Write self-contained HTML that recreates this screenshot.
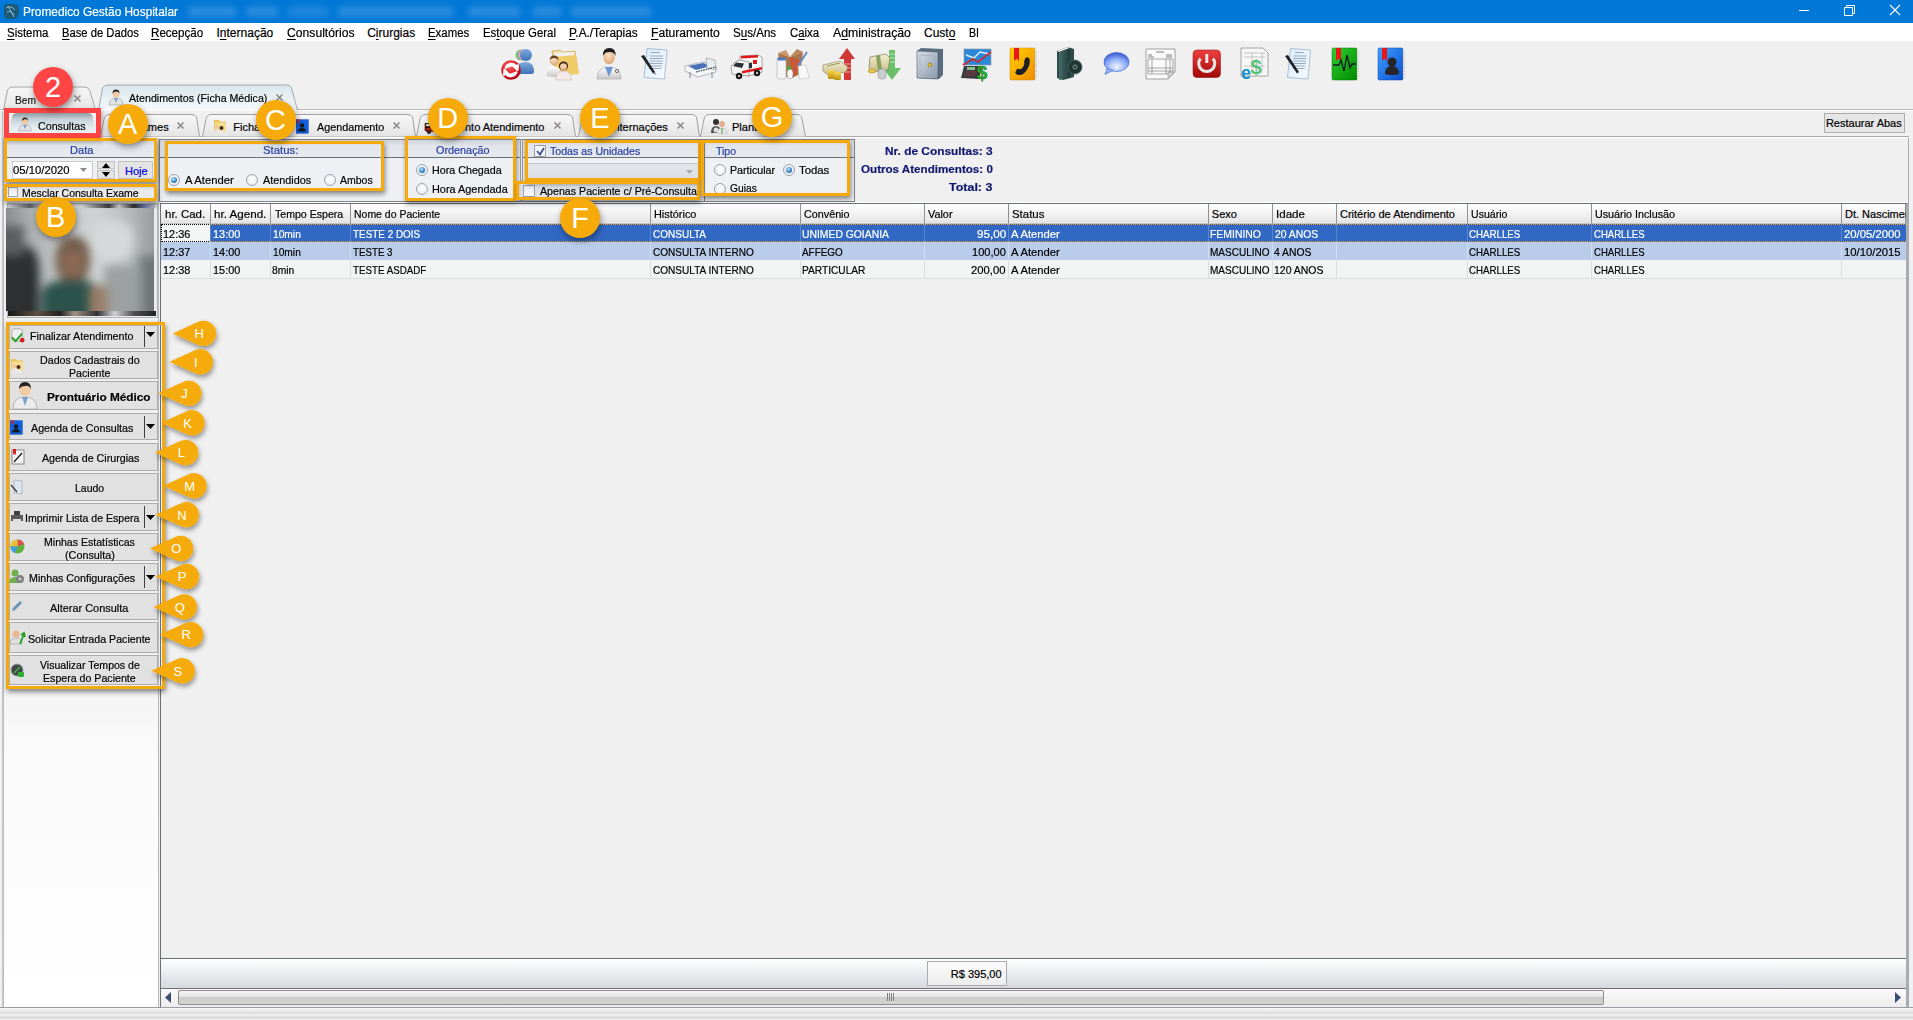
<!DOCTYPE html>
<html><head><meta charset="utf-8">
<style>
*{margin:0;padding:0;box-sizing:border-box}
html,body{width:1913px;height:1020px;overflow:hidden;background:#f0f0f0;font-family:"Liberation Sans",sans-serif;color:#000}
.a{position:absolute}
.t{position:absolute;white-space:nowrap;line-height:1}
.t,.gt,.mi,.bt{-webkit-text-stroke:0.2px currentColor}
#title{left:0;top:0;width:1913px;height:23px;background:#0078d7}
#menu{left:0;top:23px;width:1913px;height:18px;background:#fff}
.mi{position:absolute;top:27px;font-size:12px;white-space:nowrap;line-height:1;color:#000}
.mi u{text-decoration:underline;text-decoration-thickness:1px;text-underline-offset:1.5px}
.ico{position:absolute;top:48px;width:32px;height:32px}
</style></head><body>
<!-- TITLE BAR -->
<div id="title" class="a"></div>
<svg class="a" style="left:2px;top:3px" width="18" height="17" viewBox="0 0 18 17"><path d="M2 4Q2 1 6 1L13 1Q17 2 17 8Q17 15 12 16L5 16Q2 15 2 11Z" fill="#1c5a78"/><path d="M4 5 Q9 2 13 7 M5 9 Q9 7 12 12 M6 3 L12 14" stroke="#9fd0e0" stroke-width="0.8" fill="none"/></svg>
<div class="t" style="left:23.0px;top:6.0px;font-size:12.5px;color:#fff;transform:scaleX(0.949);transform-origin:0 0">Promedico Gestão Hospitalar</div>
<div class="a" style="left:188px;top:6px;width:463px;height:12px;filter:blur(3px);opacity:0.75">
 <div class="a" style="left:0;top:1px;width:48px;height:9px;background:#3d95e0"></div>
 <div class="a" style="left:58px;top:1px;width:32px;height:9px;background:#3d95e0"></div>
 <div class="a" style="left:100px;top:1px;width:40px;height:9px;background:#2f8cdc"></div>
 <div class="a" style="left:150px;top:1px;width:115px;height:9px;background:#3d95e0"></div>
 <div class="a" style="left:280px;top:1px;width:52px;height:9px;background:#3d95e0"></div>
 <div class="a" style="left:345px;top:1px;width:28px;height:9px;background:#3d95e0"></div>
 <div class="a" style="left:383px;top:1px;width:80px;height:9px;background:#3d95e0"></div>
</div>
<div class="a" style="left:1799px;top:10px;width:10px;height:1px;background:#fff"></div>
<svg class="a" style="left:1843px;top:4px" width="13" height="13" viewBox="0 0 13 13"><path d="M1.5 3.5h8v8h-8z M3.5 3.5v-2h8v8h-2" stroke="#fff" fill="none"/></svg>
<svg class="a" style="left:1889px;top:4px" width="12" height="12" viewBox="0 0 12 12"><path d="M1 1L11 11M11 1L1 11" stroke="#fff" stroke-width="1.1"/></svg>

<!-- MENU -->
<div id="menu" class="a"></div>
<div class="mi" style="left:6.7px;top:27.1px;;transform:scaleX(0.955);transform-origin:0 0"><u>S</u>istema</div>
<div class="mi" style="left:61.7px;top:27.1px;;transform:scaleX(0.936);transform-origin:0 0"><u>B</u>ase de Dados</div>
<div class="mi" style="left:151.3px;top:27.1px;;transform:scaleX(0.966);transform-origin:0 0"><u>R</u>ecepção</div>
<div class="mi" style="left:216.5px;top:27.1px;">I<u>n</u>ternação</div>
<div class="mi" style="left:286.7px;top:27.1px;;transform:scaleX(1.013);transform-origin:0 0"><u>C</u>onsultórios</div>
<div class="mi" style="left:367.2px;top:27.1px;">C<u>i</u>rurgias</div>
<div class="mi" style="left:428.3px;top:27.1px;;transform:scaleX(0.950);transform-origin:0 0"><u>E</u>xames</div>
<div class="mi" style="left:482.5px;top:27.1px;;transform:scaleX(0.951);transform-origin:0 0">Es<u>t</u>oque Geral</div>
<div class="mi" style="left:568.5px;top:27.1px;;transform:scaleX(0.984);transform-origin:0 0"><u>P</u>.A./Terapias</div>
<div class="mi" style="left:650.7px;top:27.1px;;transform:scaleX(1.011);transform-origin:0 0"><u>F</u>aturamento</div>
<div class="mi" style="left:733.0px;top:27.1px;;transform:scaleX(0.964);transform-origin:0 0">S<u>u</u>s/Ans</div>
<div class="mi" style="left:789.8px;top:27.1px;;transform:scaleX(0.948);transform-origin:0 0">C<u>a</u>ixa</div>
<div class="mi" style="left:832.5px;top:27.1px;;transform:scaleX(1.025);transform-origin:0 0">A<u>d</u>ministração</div>
<div class="mi" style="left:924.0px;top:27.1px;">Cust<u>o</u></div>
<div class="mi" style="left:969.1px;top:27.1px;;transform:scaleX(0.890);transform-origin:0 0">BI</div>

<!-- TOOLBAR ICONS -->
<svg class="a" style="left:0;top:44px" width="1420" height="40" viewBox="0 44 1420 40">
<defs>
 <linearGradient id="gBlue" x1="0" y1="0" x2="0" y2="1"><stop offset="0" stop-color="#7aa8dc"/><stop offset="1" stop-color="#3f74b8"/></linearGradient>
 <radialGradient id="gRed" cx="0.4" cy="0.3" r="0.8"><stop offset="0" stop-color="#ff6a6a"/><stop offset="0.6" stop-color="#d8101c"/><stop offset="1" stop-color="#a00010"/></radialGradient>
 <linearGradient id="gFold" x1="0" y1="0" x2="0" y2="1"><stop offset="0" stop-color="#f8e2a0"/><stop offset="1" stop-color="#e0b850"/></linearGradient>
 <radialGradient id="gSkin" cx="0.45" cy="0.35" r="0.7"><stop offset="0" stop-color="#fde4c8"/><stop offset="1" stop-color="#d8a070"/></radialGradient>
 <linearGradient id="gCoat" x1="0" y1="0" x2="0" y2="1"><stop offset="0" stop-color="#ffffff"/><stop offset="1" stop-color="#c8c8c8"/></linearGradient>
 <linearGradient id="gPaper" x1="0" y1="0" x2="1" y2="1"><stop offset="0" stop-color="#d8ecfc"/><stop offset="1" stop-color="#f8fbff"/></linearGradient>
 <linearGradient id="gSafe" x1="0" y1="0" x2="1" y2="1"><stop offset="0" stop-color="#d8e0e8"/><stop offset="1" stop-color="#8898a8"/></linearGradient>
 <linearGradient id="gYel" x1="0" y1="0" x2="1" y2="1"><stop offset="0" stop-color="#ffd200"/><stop offset="1" stop-color="#f08c00"/></linearGradient>
 <linearGradient id="gGrn" x1="0" y1="0" x2="1" y2="1"><stop offset="0" stop-color="#30d030"/><stop offset="1" stop-color="#008a00"/></linearGradient>
 <linearGradient id="gBlu2" x1="0" y1="0" x2="1" y2="1"><stop offset="0" stop-color="#40a0ff"/><stop offset="1" stop-color="#0a50d0"/></linearGradient>
 <radialGradient id="gChat" cx="0.5" cy="0.75" r="0.8"><stop offset="0" stop-color="#f0f6ff"/><stop offset="0.5" stop-color="#90b0f8"/><stop offset="1" stop-color="#2848d0"/></radialGradient>
 <linearGradient id="gPow" x1="0" y1="0" x2="0" y2="1"><stop offset="0" stop-color="#f04040"/><stop offset="1" stop-color="#a00808"/></linearGradient>
 <linearGradient id="gDark" x1="0" y1="0" x2="1" y2="0"><stop offset="0" stop-color="#466c68"/><stop offset="1" stop-color="#1e3a38"/></linearGradient>
 <linearGradient id="gBill" x1="0" y1="0" x2="0" y2="1"><stop offset="0" stop-color="#f4f0d0"/><stop offset="1" stop-color="#c8bc88"/></linearGradient>
 <linearGradient id="gGold" x1="0" y1="0" x2="0" y2="1"><stop offset="0" stop-color="#f8d850"/><stop offset="1" stop-color="#c09010"/></linearGradient>
</defs>
<!-- 1 users refresh 501-533 x 47-80 -->
<circle cx="521" cy="55" r="5.5" fill="#78c078"/><circle cx="523.5" cy="55" r="5.5" fill="#d898c0"/>
<circle cx="526" cy="55" r="6" fill="url(#gBlue)"/>
<path d="M515 72 Q515 62 526 62 Q534 62 534 72 Q534 74 530 74 L517 74Z" fill="url(#gBlue)"/>
<circle cx="511" cy="70" r="9.8" fill="url(#gRed)"/>
<path d="M505.5 68.5 A6 6 0 0 1 516 66 L513.5 66 L517.5 70 L518 64.5 M516.5 71.5 A6 6 0 0 1 506 74 L508.5 74 L504.5 70 L504 75.5" stroke="#fff" stroke-width="2.2" fill="#fff" stroke-linejoin="round"/>
<!-- 2 folder people 547-579 x 49-79 -->
<path d="M552 51 L560 50 L562 52 L575 51 L578 72 L556 74Z" fill="url(#gFold)" stroke="#c09840" stroke-width="0.6"/>
<path d="M554 53 L574 52 L576 70 L556 71Z" fill="#f0f0f0"/>
<path d="M553 57 L576 55 L579 74 L556 76Z" fill="#f0cc68"/>
<circle cx="554" cy="61" r="4.2" fill="url(#gSkin)"/><path d="M549.5 60 Q550 55.5 554 55.5 Q558.5 55.5 558.5 60 Q556 57.5 554 58 Q551 58 549.5 60Z" fill="#6a4020"/>
<path d="M546.5 76 Q546.5 66.5 554 66.5 Q561 66.5 561 76 Q556 78 546.5 76Z" fill="url(#gCoat)"/>
<circle cx="563.5" cy="66" r="4.6" fill="#3a2418"/><circle cx="563.5" cy="66.8" r="3.6" fill="url(#gSkin)"/>
<path d="M555.5 80 Q555.5 71 563.5 71 Q571.5 71 571.5 80Z" fill="#f4e8e8" stroke="#c0b0b0" stroke-width="0.5"/>
<!-- 3 doctor 597-621 x 47-79 -->
<path d="M597 79 Q597 67 609 67 Q621 67 621 79Z" fill="url(#gCoat)" stroke="#a8a8a8" stroke-width="0.6"/>
<path d="M605 67 L609 77 L613 67Z" fill="#6c98d0"/>
<circle cx="617" cy="71" r="1.6" fill="none" stroke="#505050" stroke-width="0.8"/>
<ellipse cx="609" cy="57.5" rx="5.6" ry="6.8" fill="url(#gSkin)"/>
<path d="M603 56 Q602.5 48 609.5 48 Q616 48 615.5 56 Q614 51.5 609 52 Q604.5 52 603 56Z" fill="#1e1e1e"/>
<!-- 4 laudo doc 641-667 x 48-79 -->
<path d="M647 48.5 L667 50 L664.5 79 L644 77.5Z" fill="url(#gPaper)" stroke="#8ea8c8" stroke-width="0.7"/>
<path d="M651 52.5h9 M650 56h13 M650 58.5h13 M649.5 61h13 M649.5 63.5h13 M649 66h13 M649 68.5h12" stroke="#9aaac0" stroke-width="1"/>
<path d="M641 56 L644 55 L655 72 L653 73.5Z" fill="#202428"/><path d="M653 73.5 L655 72 L656.5 75Z" fill="#808890"/>
<!-- 5 bed 685-716 x 57-79 -->
<path d="M685 66 L703 62 L716 66 L716 72 L698 77 L685 71Z" fill="#f4f6f8" stroke="#8a9098" stroke-width="0.6"/>
<path d="M688 66 L703 63 L711 66 L696 70Z" fill="#4a70b8"/>
<path d="M706 58 L715 60 L716 70 L707 68Z" fill="#e8ecf0" stroke="#8a9098" stroke-width="0.6"/>
<path d="M696 72 L716 67" stroke="#303848" stroke-width="1.2" stroke-dasharray="1.5 1"/>
<path d="M690 72v6 M712 72v6" stroke="#808890" stroke-width="1"/>
<!-- 6 ambulance 731-762 x 54-80 -->
<path d="M740 56 L758 55 L762 57 L762 72 L749 76 L740 74Z" fill="#fafafa" stroke="#707070" stroke-width="0.6"/>
<path d="M731 66 L735 62 L740 60 L749 62 L749 76 L732 74Z" fill="#f4f4f4" stroke="#707070" stroke-width="0.6"/>
<path d="M733 66 L736 62.5 L744 63.5 L742 68Z" fill="#2a3038"/>
<path d="M749 63 L752 62.5 L752 68 L749 68.5Z" fill="#2a3038"/>
<path d="M741 56 L758 55 L758 57.5 L741 58.5Z" fill="#e01818"/>
<path d="M742 71 L762 67 L762 69.5 L742 73.5Z" fill="#e01818"/>
<rect x="753" y="60" width="4" height="4" fill="#e01818"/>
<circle cx="739" cy="76" r="3.2" fill="#181818"/><circle cx="739" cy="76" r="1.2" fill="#c0c0c0"/>
<circle cx="757" cy="73" r="3.2" fill="#181818"/><circle cx="757" cy="73" r="1.2" fill="#c0c0c0"/>
<!-- 7 box 777-809 x 49-80 -->
<path d="M778 53 L790 57 L803 52 L800 74 L790 79 L781 74Z" fill="#a8744a"/>
<path d="M778 53 L790 57 L786 50Z" fill="#c89868"/><path d="M790 57 L803 52 L797 49Z" fill="#b88458"/>
<path d="M790 57 L800 60 L797 74 L790 79Z" fill="#d84830" opacity="0.6"/>
<path d="M798 66 L807 52" stroke="#6888c8" stroke-width="2"/>
<rect x="777" y="59" width="9" height="20" rx="2" fill="#f4f4f4" stroke="#98a0a8" stroke-width="0.5"/><rect x="777.5" y="57.5" width="8" height="3" fill="#5078c0"/>
<ellipse cx="790" cy="74" rx="3" ry="5" fill="#f8f8f8" stroke="#a0a0a0" stroke-width="0.5"/><circle cx="789" cy="68" r="2" fill="#40b040"/>
<path d="M798 66 L806 65 L809 78 L799 79Z" fill="#f8f8f8" stroke="#b0b0b0" stroke-width="0.5"/>
<!-- 8 money up 823-855 x 48-80 -->
<path d="M847 48 L855 59 L851 59 L851 80 L844 80 L844 59 L839 59Z" fill="#d03838"/>
<path d="M844 64h7 M844 68h7 M844 72h7" stroke="#f0a0a0" stroke-width="1"/>
<path d="M823 65 L840 61 L848 67 L846 72 L828 75 L823 71Z" fill="url(#gBill)" stroke="#8a8050" stroke-width="0.6"/>
<path d="M827 66 L840 63" stroke="#9a9060" stroke-width="1"/>
<rect x="828" y="70" width="7" height="9" rx="1" fill="url(#gGold)"/><rect x="834" y="72" width="7" height="8" rx="1" fill="url(#gGold)"/>
<!-- 9 money down 869-901 x 50-80 -->
<path d="M889 50 L895 50 L895 68 L901 68 L892 80 L883 68 L889 68Z" fill="#68c068"/>
<path d="M889 54h6 M889 58h6 M889 62h6" stroke="#b8e8b8" stroke-width="1"/>
<path d="M870 57 L886 54 L890 58 L888 70 L872 72 L869 68Z" fill="url(#gBill)" stroke="#706840" stroke-width="0.6"/>
<path d="M876 56 L880 55 L882 71 L878 71.5Z" fill="#88a060"/>
<ellipse cx="872" cy="71" rx="4" ry="2" fill="#e8c848" stroke="#a08020" stroke-width="0.5"/>
<rect x="878" y="69" width="8" height="10" rx="3" fill="#c8ccd0" stroke="#80868c" stroke-width="0.5"/>
<!-- 10 safe 917-943 x 48-79 -->
<path d="M917 51 L921 48 L943 49 L943 75 L939 79 L917 78Z" fill="#5a6c80"/>
<path d="M917 51 L938 52 L938 79 L917 78Z" fill="url(#gSafe)" stroke="#485868" stroke-width="0.6"/>
<path d="M920 55 L935 56 L935 76 L920 75Z" fill="none" stroke="#98a8b8" stroke-width="0.6"/>
<circle cx="930" cy="65" r="2" fill="#e0c040" stroke="#806010" stroke-width="0.5"/>
<!-- 11 calc chart 961-993 x 49-79 -->
<rect x="964" y="49" width="27" height="16" fill="#2a88d8" stroke="#90a0b0" stroke-width="0.7"/>
<path d="M966 55 L974 58 L980 52 L990 54" stroke="#e0f0ff" stroke-width="1.5" fill="none"/>
<path d="M963 65 L973 59 L978 62 L991 52" stroke="#d02828" stroke-width="1.6" fill="none"/>
<path d="M961 78 L964 66 L982 66 L979 79Z" fill="#383c44"/>
<rect x="967" y="67" width="8" height="3" fill="#88c088"/>
<path d="M966 72h10 M965 75h10" stroke="#c03030" stroke-width="1" stroke-dasharray="2 1"/>
<text x="982" y="79" font-size="19" font-weight="bold" fill="#30b030" stroke="#107010" stroke-width="0.5" font-family="Liberation Sans" text-anchor="middle">$</text>
<!-- 12 yellow book 1010-1037 x 48-80 -->
<rect x="1010" y="48" width="25" height="32" rx="1.5" fill="url(#gYel)" stroke="#d08000" stroke-width="0.5"/>
<path d="M1036 50v28" stroke="#c8c8c8" stroke-width="2.2"/><path d="M1036 50v28" stroke="#fff" stroke-width="1.4" stroke-dasharray="1.2 1"/>
<path d="M1014 48h5v13l-2.5-2.5-2.5 2.5z" fill="#e81818"/>
<path d="M1016 71 Q1014 74 1018 75 Q1024 76 1028 68 Q1031 62 1029 58 Q1026 56 1025 59 L1024 62 Q1025 64 1023 67 Q1021 70 1019 69 Q1017 68 1016 71Z" fill="#1e1e28"/>
<!-- 13 dark book 1057-1082 x 47-80 -->
<path d="M1057 51 L1068 47 L1074 49 L1074 77 L1063 80 L1057 78Z" fill="#2c4a48"/>
<path d="M1057 51 L1068 47 L1070 48 L1059 52Z" fill="#f0f0f0"/>
<path d="M1059 52 L1070 48 L1070 77 L1059 80Z" fill="url(#gDark)"/>
<circle cx="1075" cy="67" r="7" fill="#203430" stroke="#506a68" stroke-width="0.8"/><circle cx="1075" cy="67" r="2" fill="none" stroke="#90b0a8" stroke-width="0.8"/>
<!-- 14 chat 1104-1129 x 52-75 -->
<ellipse cx="1116.5" cy="62" rx="12.5" ry="9.5" fill="url(#gChat)" stroke="#3050c8" stroke-width="0.6"/>
<path d="M1107 68 L1105 74.5 L1113 70.5Z" fill="#90b0f8" stroke="#3050c8" stroke-width="0.5"/>
<!-- 15 form 1146-1176 x 49-79 -->
<path d="M1146 49 H1175 V72 L1168 79 H1146Z" fill="#fafafa" stroke="#8a8a8a" stroke-width="0.8"/>
<path d="M1156 52h8 M1148 55h4 M1148 57h6 M1166 55h6 M1166 57h6" stroke="#606060" stroke-width="0.8"/>
<path d="M1148 59h25 v15 h-25z M1148 68h25 M1148 71h25 M1152 59v15 M1166 59v15 M1170 59v15" stroke="#707070" stroke-width="0.6" fill="none"/>
<path d="M1168 79 L1175 72 H1168Z" fill="#d0d0d0" stroke="#8a8a8a" stroke-width="0.5"/>
<!-- 16 power 1193-1221 x 50-78 -->
<rect x="1193" y="50" width="27.5" height="27.5" rx="4" fill="url(#gPow)" stroke="#900808" stroke-width="0.5"/>
<path d="M1200.5 58.5 A8 8 0 1 0 1213 58.5" stroke="#e8e8e8" stroke-width="3" fill="none"/>
<path d="M1206.8 54v9" stroke="#e8e8e8" stroke-width="3"/>
<!-- 17 e$ 1237-1269 x 47-80 -->
<path d="M1241 48 H1263 L1268 53 V76 H1241Z" fill="#f6f6f6" stroke="#909090" stroke-width="0.8"/>
<path d="M1244 53h21 M1244 57h21 M1244 66h21 M1252 53v20 M1262 53v20" stroke="#b8b8b8" stroke-width="0.8"/>
<text x="1256" y="74" font-size="20" font-weight="bold" fill="#58c078" font-family="Liberation Sans" text-anchor="middle">$</text>
<text x="1246" y="79" font-size="18" font-weight="bold" fill="#1890d0" font-family="Liberation Sans" text-anchor="middle">e</text>
<!-- 18 laudo 1285-1311 x 48-79 -->
<path d="M1290.5 48.5 L1310.5 50 L1308 79 L1287.5 77.5Z" fill="url(#gPaper)" stroke="#8ea8c8" stroke-width="0.7"/>
<path d="M1295 52.5h9 M1293.5 56h13 M1293.5 58.5h13 M1293 61h13 M1293 63.5h13 M1292.5 66h13 M1292.5 68.5h12" stroke="#9aaac0" stroke-width="1"/>
<path d="M1285 56 L1288 55 L1299 72 L1297 73.5Z" fill="#202428"/>
<!-- 19 green book 1332-1359 x 48-80 -->
<rect x="1332" y="48" width="25" height="32" rx="1.5" fill="url(#gGrn)" stroke="#007000" stroke-width="0.5"/>
<path d="M1358 50v28" stroke="#c8c8c8" stroke-width="2.2"/><path d="M1358 50v28" stroke="#fff" stroke-width="1.4" stroke-dasharray="1.2 1"/>
<path d="M1336 48h5v13l-2.5-2.5-2.5 2.5z" fill="#e81818"/>
<path d="M1333 65 H1339 L1341 60 L1344 71 L1347 55 L1350 68 L1352 64 H1356" stroke="#181828" stroke-width="1.3" fill="none"/>
<!-- 20 blue book 1378-1405 x 48-80 -->
<rect x="1378" y="48" width="25" height="32" rx="1.5" fill="url(#gBlu2)" stroke="#0840a0" stroke-width="0.5"/>
<path d="M1404 50v28" stroke="#c8c8c8" stroke-width="2.2"/><path d="M1404 50v28" stroke="#fff" stroke-width="1.4" stroke-dasharray="1.2 1"/>
<path d="M1382 48h5v13l-2.5-2.5-2.5 2.5z" fill="#e81818"/>
<circle cx="1392" cy="62" r="4.5" fill="#282428"/>
<path d="M1385 74 Q1385 66 1392 66 Q1399 66 1399 74 Q1392 76 1385 74Z" fill="#282428"/>
</svg>

<!-- TABS -->
<!-- row 1 tabs -->
<div class="a" style="left:0;top:109px;width:1913px;height:1px;background:#b8b8b8"></div>
<div class="a" style="left:0;top:110px;width:1913px;height:1px;background:#fff"></div>
<svg class="a" style="left:0;top:84px" width="300" height="27" viewBox="0 0 300 27">
 <defs>
  <linearGradient id="tg1" x1="0" y1="0" x2="0" y2="1"><stop offset="0" stop-color="#f6f6f6"/><stop offset="1" stop-color="#e6e6e6"/></linearGradient>
  <linearGradient id="tg2" x1="0" y1="0" x2="0" y2="1"><stop offset="0" stop-color="#d9e6ee"/><stop offset="0.5" stop-color="#e9f0f4"/><stop offset="1" stop-color="#f6f9fa"/></linearGradient>
 </defs>
 <path d="M3.5 26 L7.5 6 Q9 3 13 3 L85 3 Q88 3 89.5 6 L95.5 26" fill="url(#tg1)" stroke="#a8a8a8"/>
 <path d="M98.5 26.5 L102.5 4 Q104 1 108 1 L287 1 Q290 1 291.5 4 L297.5 26.5" fill="url(#tg2)" stroke="#a0a8ae"/>
</svg>
<div class="t" style="left:14.5px;top:94.5px;font-size:11.5px;color:#1a1a1a;transform:scaleX(0.888);transform-origin:0 0">Bem</div>
<svg class="a" style="left:73px;top:94px" width="9" height="9" viewBox="0 0 9 9"><path d="M1.5 1.5L7.5 7.5M7.5 1.5L1.5 7.5" stroke="#8a8a8a" stroke-width="1.6"/></svg>
<svg class="a" style="left:108px;top:88px" width="16" height="18" viewBox="0 0 16 18"><path d="M1 17Q1 10 8 10Q15 10 15 17Z" fill="#e4e4e4" stroke="#9a9a9a" stroke-width="0.6"/><path d="M6 10L8 15L10 10Z" fill="#7aa0d0"/><circle cx="8" cy="6" r="3.5" fill="#f0c8a0"/><path d="M4.5 5.5Q4.5 1.5 8 1.5Q11.5 1.5 11.5 5.5Q10 3 8 3.5Q6 3.5 4.5 5.5Z" fill="#222"/></svg>
<div class="t" style="left:129.2px;top:93.3px;font-size:11.5px;color:#000;transform:scaleX(0.925);transform-origin:0 0">Atendimentos (Ficha Médica)</div>
<svg class="a" style="left:275px;top:93px" width="9" height="9" viewBox="0 0 9 9"><path d="M1.5 1.5L7.5 7.5M7.5 1.5L1.5 7.5" stroke="#8a8a8a" stroke-width="1.6"/></svg>

<!-- row 2 tabs -->
<div class="a" style="left:4px;top:136px;width:1905px;height:1px;background:#a8a8a8"></div>
<div class="a" style="left:4px;top:137px;width:1905px;height:1px;background:#ffffff"></div>
<div class="a" style="left:2px;top:111px;width:1px;height:900px;background:#c8c8c8"></div>
<svg class="a" style="left:0;top:111px" width="820" height="27" viewBox="0 0 820 27">
 <defs>
  <linearGradient id="tg3" x1="0" y1="0" x2="0" y2="1"><stop offset="0" stop-color="#f7f7f7"/><stop offset="1" stop-color="#e4e4e4"/></linearGradient>
  <linearGradient id="tg4" x1="0" y1="0" x2="0" y2="1"><stop offset="0" stop-color="#8e9aa2"/><stop offset="0.25" stop-color="#c4d0d8"/><stop offset="0.6" stop-color="#e2ecf0"/><stop offset="1" stop-color="#eef4f6"/></linearGradient>
 </defs>
 <path d="M100.5 25.5 L104.5 6 Q106 3.5 110 3.5 L192 3.5 Q195 3.5 196.5 6 L199.5 25.5" fill="url(#tg3)" stroke="#a0a0a0"/>
 <path d="M202.5 25.5 L206.5 6 Q208 3.5 212 3.5 L408 3.5 Q411 3.5 412.5 6 L415.5 25.5" fill="url(#tg3)" stroke="#a0a0a0"/>
 <path d="M416.5 25.5 L420.5 6 Q422 3.5 426 3.5 L568 3.5 Q571 3.5 572.5 6 L575.5 25.5" fill="url(#tg3)" stroke="#a0a0a0"/>
 <path d="M578.5 25.5 L582.5 6 Q584 3.5 588 3.5 L692 3.5 Q695 3.5 696.5 6 L699.5 25.5" fill="url(#tg3)" stroke="#a0a0a0"/>
 <path d="M700.5 25.5 L704.5 6 Q706 3.5 710 3.5 L797 3.5 Q800 3.5 801.5 6 L805.5 25.5" fill="url(#tg3)" stroke="#a0a0a0"/>
 <path d="M9 26 L12 5 Q13.5 2 17 2 L88 2 Q91 2 92.5 5 L96 26 Z" fill="url(#tg4)"/>
</svg>
<!-- tab icons & labels -->
<svg class="a" style="left:18px;top:116px" width="14" height="16" viewBox="0 0 16 18"><path d="M1 17Q1 10 8 10Q15 10 15 17Z" fill="#e4e4e4" stroke="#9a9a9a" stroke-width="0.6"/><path d="M6 10L8 15L10 10Z" fill="#7aa0d0"/><circle cx="8" cy="6" r="3.5" fill="#f0c8a0"/><path d="M4.5 5.5Q4.5 1.5 8 1.5Q11.5 1.5 11.5 5.5Q10 3 8 3.5Q6 3.5 4.5 5.5Z" fill="#222"/></svg>
<div class="t" style="left:38.4px;top:120.7px;font-size:11px;color:#000;transform:scaleX(0.971);transform-origin:0 0">Consultas</div>
<div class="t" style="left:128.9px;top:121.9px;font-size:11px;color:#000">Exames</div>
<svg class="a" style="left:176px;top:121px" width="9" height="9" viewBox="0 0 9 9"><path d="M1.5 1.5L7.5 7.5M7.5 1.5L1.5 7.5" stroke="#8a8a8a" stroke-width="1.6"/></svg>
<svg class="a" style="left:212px;top:118px" width="16" height="16" viewBox="0 0 32 32"><path d="M4 4h10l2 3h12v20H4z" fill="#e8c25a"/><path d="M6 9h22v18H6z" fill="#f5dc90"/><circle cx="11" cy="18" r="4" fill="#f0c8a0"/><path d="M4 30Q4 22 11 22Q18 22 18 30Z" fill="#e8e4e0"/><circle cx="19" cy="20" r="4" fill="#4a2e1c"/><path d="M11 32Q11 25 19 25Q27 25 27 32Z" fill="#f0e8e8"/></svg>
<div class="t" style="left:233.3px;top:121.9px;font-size:11px;color:#000">Ficha</div>
<svg class="a" style="left:296px;top:119px" width="14" height="15" viewBox="0 0 28 30"><rect x="0" y="1" width="25" height="28" fill="#1060e0" stroke="#0840a0" stroke-width="0.6"/><path d="M3 0h4v9l-2-2-2 2z" fill="#d82020"/><circle cx="12" cy="13" r="4.5" fill="#181818"/><path d="M4 25Q4 18 12 18Q20 18 20 25Z" fill="#181818"/></svg>
<div class="t" style="left:316.5px;top:121.9px;font-size:11px;color:#000;transform:scaleX(0.982);transform-origin:0 0">Agendamento</div>
<svg class="a" style="left:392px;top:121px" width="9" height="9" viewBox="0 0 9 9"><path d="M1.5 1.5L7.5 7.5M7.5 1.5L1.5 7.5" stroke="#8a8a8a" stroke-width="1.6"/></svg>
<svg class="a" style="left:426px;top:124px" width="10" height="10" viewBox="0 0 10 10"><rect x="0" y="2" width="9" height="6" fill="#c02020"/><circle cx="3" cy="8" r="2" fill="#202020"/></svg>
<div class="t" style="left:424.0px;top:121.9px;font-size:11px;color:#000">Pagamento Atendimento</div>
<svg class="a" style="left:553px;top:121px" width="9" height="9" viewBox="0 0 9 9"><path d="M1.5 1.5L7.5 7.5M7.5 1.5L1.5 7.5" stroke="#8a8a8a" stroke-width="1.6"/></svg>
<div class="t" style="left:610.4px;top:122.1px;font-size:11px;color:#000">Internações</div>
<svg class="a" style="left:676px;top:121px" width="9" height="9" viewBox="0 0 9 9"><path d="M1.5 1.5L7.5 7.5M7.5 1.5L1.5 7.5" stroke="#8a8a8a" stroke-width="1.6"/></svg>
<svg class="a" style="left:711px;top:118px" width="17" height="16" viewBox="0 0 17 16"><circle cx="5" cy="4" r="3" fill="#303030"/><path d="M0 15Q0 8 5 8Q10 8 10 15Z" fill="#505050"/><circle cx="5" cy="12" r="2.5" fill="#e0e0e0"/><circle cx="11" cy="6" r="3" fill="#e0b090"/><path d="M6 16Q6 10 11 10Q16 10 16 16Z" fill="#e8e8e8" stroke="#aaa" stroke-width="0.5"/><path d="M11 10v6" stroke="#40a040"/></svg>
<div class="t" style="left:732.0px;top:122.1px;font-size:11px;color:#000">Plantão</div>

<!-- Restaurar Abas -->
<div class="a" style="left:1824px;top:113px;width:81px;height:20px;background:#e6e6e6;border:1px solid #adadad"></div>
<div class="t" style="left:1825.9px;top:118.3px;font-size:11px;color:#000">Restaurar Abas</div>


<!-- CONTENT -->
<style>
.hdr{position:absolute;height:18px;background:linear-gradient(#cfd3da,#e2e5ea 35%,#e6e9ee);border-bottom:1px solid #6c7078}
.pbody{position:absolute;background:#eef0f3}
.rad{position:absolute;width:12px;height:12px;border-radius:50%;background:radial-gradient(circle at 50% 40%,#fff,#e4e6ea);border:1px solid #9ca4ac}
.rad.on::after{content:"";position:absolute;left:2px;top:2px;width:6px;height:6px;border-radius:50%;background:radial-gradient(circle at 40% 35%,#bfe6ff,#2a7fc0 60%,#0e4c80)}
.chk{position:absolute;width:12px;height:12px;background:linear-gradient(#e8eaee,#fafbfc);border:1px solid #9aa0a8}
.btn{position:absolute;left:9px;width:149px;background:#e1e1e1;border:1px solid #adadad}
.bt{position:absolute;white-space:nowrap;line-height:13px;font-size:11px;color:#000;text-align:center}
.gh{position:absolute;top:204px;height:20px;background:linear-gradient(#ffffff,#f2f2f2 50%,#e4e4e4);border-right:1px solid #8e9296;border-bottom:1px solid #c4c4c4}
.gt{position:absolute;white-space:nowrap;line-height:1;font-size:11px;color:#000}
.row{position:absolute;left:161px;width:1745px;height:18px}
.cs{position:absolute;top:0;height:18px;border-right:1px solid #d8dcdc}
</style>
<!-- content frame -->
<div class="a" style="left:4px;top:138px;width:1905px;height:870px;background:#f0f0f0;border-right:1px solid #a0a0a0"></div>

<!-- LEFT SIDEBAR -->
<div class="a" style="left:4px;top:138px;width:155px;height:870px;background:linear-gradient(#f0f0f0 0%,#f0f0f0 60%,#fafafa 70%,#ffffff 100%);border-right:1px solid #b4b8bc"></div>
<div class="a" style="left:3px;top:138px;width:1px;height:871px;background:#b8bcc0"></div>
<!-- Data group -->
<div class="hdr" style="left:6px;top:140px;width:150px"></div>
<div class="t" style="left:70.1px;top:145.3px;font-size:11px;color:#2840a0;transform:scaleX(1.006);transform-origin:0 0">Data</div>
<div class="pbody" style="left:6px;top:159px;width:150px;height:21px"></div>
<div class="a" style="left:12px;top:161px;width:81px;height:18px;background:#fff;border:1px solid #c8ccd0"></div>
<div class="t" style="left:13.0px;top:165.0px;font-size:11px;color:#000;transform:scaleX(1.026);transform-origin:0 0">05/10/2020</div>
<svg class="a" style="left:80px;top:168px" width="7" height="4"><path d="M0 0h7L3.5 4z" fill="#8a8a8a"/></svg>
<div class="a" style="left:97px;top:161px;width:18px;height:8px;background:#e4e4e4;border:1px solid #c0c0c0"></div>
<div class="a" style="left:97px;top:170px;width:18px;height:9px;background:#e4e4e4;border:1px solid #c0c0c0"></div>
<svg class="a" style="left:101px;top:163px" width="10" height="14"><path d="M1 5h8L5 0z M1 9h8L5 14z" fill="#000"/></svg>
<div class="a" style="left:118px;top:161px;width:35px;height:18px;background:#e4e4e4;border:1px solid #c0c0c0"></div>
<div class="t" style="left:125.0px;top:165.5px;font-size:11px;color:#0000e0">Hoje</div>
<!-- Mesclar -->
<div class="pbody" style="left:6px;top:185px;width:150px;height:14px;background:#e8eaee"></div>
<div class="chk" style="left:8px;top:187px;width:10px;height:10px"></div>
<div class="t" style="left:22.0px;top:188.0px;font-size:11px;color:#000;transform:scaleX(0.953);transform-origin:0 0">Mesclar Consulta Exame</div>

<!-- Picture frame -->
<div class="a" style="left:7px;top:203px;width:151px;height:115px;background:#e8eaec;border:1px solid #b0b4b8"></div>
<div class="a" style="left:6px;top:208px;width:148px;height:103px;overflow:hidden;background:#a8acac">
 <div class="a" style="left:-12px;top:-12px;width:172px;height:127px;filter:blur(5px)">
  <div class="a" style="left:0;top:0;width:172px;height:127px;background:linear-gradient(90deg,#7a7e7e 0%,#a8acac 20%,#c4c8c8 40%,#d0d4d4 60%,#b4b8b8 80%,#8a8e8e 100%)"></div>
  <div class="a" style="left:0;top:50px;width:45px;height:77px;background:#2c3032;border-radius:0 30% 0 0"></div>
  <div class="a" style="left:0;top:30px;width:30px;height:30px;background:#5a5e60"></div>
  <div class="a" style="left:100px;top:25px;width:40px;height:40px;background:#d6d9d9;border-radius:40%"></div>
  <div class="a" style="left:145px;top:60px;width:27px;height:67px;background:#707676"></div>
  <div class="a" style="left:110px;top:70px;width:38px;height:57px;background:#9ca0a0"></div>
  <div class="a" style="left:62px;top:40px;width:34px;height:48px;border-radius:45%;background:#6e5848"></div>
  <div class="a" style="left:68px;top:52px;width:22px;height:30px;border-radius:45%;background:#8a6a54"></div>
  <div class="a" style="left:48px;top:85px;width:60px;height:42px;border-radius:30% 30% 0 0;background:#2c524c"></div>
  <div class="a" style="left:95px;top:90px;width:18px;height:37px;background:#9a7e68"></div>
 </div>
</div>
<div class="a" style="left:8px;top:311px;width:148px;height:5px;background:linear-gradient(90deg,#181818,#605040 20%,#202020 35%,#a09080 45%,#303030 60%,#d0d0d0 72%,#505050 85%,#202020)"></div>
<div class="a" style="left:8px;top:204px;width:148px;height:4px;background:linear-gradient(90deg,#d0d4d8,#606468 15%,#e0e0e0 25%,#d8dcdc 50%,#404040 68%,#d0d0d0 75%,#303030 85%,#6070a0 92%,#c0c4c8)"></div>

<!-- BUTTONS -->
<div class="btn" style="top:325px;height:24px"></div>
<div class="a" style="left:144px;top:326px;width:1px;height:21px;background:#404040"></div>
<svg class="a" style="left:146px;top:332px" width="9" height="5"><path d="M0 0h9L4.5 5z" fill="#000"/></svg>
<svg class="a" style="left:10px;top:328px" width="15" height="15" viewBox="0 0 16 16"><rect x="2" y="1" width="11" height="13" rx="2" fill="#f0f0f0" stroke="#909090" stroke-width="0.7"/><path d="M2 10L6 14L13 6" stroke="#20a020" stroke-width="2" fill="none"/><circle cx="13" cy="13" r="2.5" fill="#d02020"/></svg>
<div class="bt" style="left:30.1px;top:329.9px;;transform:scaleX(0.979);transform-origin:0 0">Finalizar Atendimento</div>

<div class="btn" style="top:351px;height:28px"></div>
<svg class="a" style="left:9px;top:357px" width="16" height="16" viewBox="0 0 32 32"><path d="M4 4h10l2 3h12v20H4z" fill="#e8c25a"/><path d="M6 9h22v18H6z" fill="#f5dc90"/><circle cx="11" cy="18" r="4" fill="#f0c8a0"/><path d="M4 30Q4 22 11 22Q18 22 18 30Z" fill="#e8e4e0"/><circle cx="19" cy="20" r="4" fill="#4a2e1c"/><path d="M11 32Q11 25 19 25Q27 25 27 32Z" fill="#f0e8e8"/></svg>
<div class="bt" style="left:40.0px;top:354.1px;;transform:scaleX(0.970);transform-origin:0 0">Dados Cadastrais do</div>
<div class="bt" style="left:69.0px;top:366.8px;;transform:scaleX(0.967);transform-origin:0 0">Paciente</div>

<div class="btn" style="top:381px;height:29px"></div>
<svg class="a" style="left:12px;top:380px" width="26" height="30" viewBox="0 0 26 30"><path d="M1 29Q1 17 13 17Q25 17 25 29Z" fill="#ececec" stroke="#a0a0a0" stroke-width="0.7"/><path d="M10 17L13 26L16 17Z" fill="#7aa0d0"/><circle cx="13" cy="10" r="6" fill="#f2cba4"/><path d="M7 9Q7 2 13 2Q19 2 19 9Q17 5 13 6Q9 6 7 9Z" fill="#222"/></svg>
<div class="bt" style="left:46.7px;top:390.7px;font-weight:bold;font-size:11.5px;transform:scaleX(1.026);transform-origin:0 0">Prontuário Médico</div>

<div class="btn" style="top:413px;height:27px"></div>
<div class="a" style="left:144px;top:416px;width:1px;height:22px;background:#404040"></div>
<svg class="a" style="left:146px;top:424px" width="9" height="5"><path d="M0 0h9L4.5 5z" fill="#000"/></svg>
<svg class="a" style="left:10px;top:420px" width="14" height="15" viewBox="0 0 28 30"><rect x="0" y="1" width="25" height="28" fill="#1060e0" stroke="#0840a0" stroke-width="0.6"/><path d="M3 0h4v9l-2-2-2 2z" fill="#d82020"/><circle cx="12" cy="13" r="4.5" fill="#181818"/><path d="M4 25Q4 18 12 18Q20 18 20 25Z" fill="#181818"/></svg>
<div class="bt" style="left:31.4px;top:421.7px;;transform:scaleX(0.973);transform-origin:0 0">Agenda de Consultas</div>

<div class="btn" style="top:443px;height:28px"></div>
<svg class="a" style="left:11px;top:449px" width="14" height="16" viewBox="0 0 14 16"><rect x="1" y="1" width="12" height="14" fill="#f4f4f4" stroke="#707070" stroke-width="0.8"/><path d="M2 0h3v6l-1.5-1.5L2 6z" fill="#e02020"/><path d="M3 13L11 4" stroke="#101010" stroke-width="1.2"/></svg>
<div class="bt" style="left:41.5px;top:452.4px;;transform:scaleX(0.970);transform-origin:0 0">Agenda de Cirurgias</div>

<div class="btn" style="top:473px;height:28px"></div>
<svg class="a" style="left:10px;top:479px" width="14" height="16" viewBox="0 0 14 16"><path d="M4 1L12 2L12 15L4 14Z" fill="#dde6ee" stroke="#90a0b0" stroke-width="0.6"/><path d="M1 6L7 13" stroke="#303030" stroke-width="1.2"/></svg>
<div class="bt" style="left:75.3px;top:482.0px;;transform:scaleX(0.951);transform-origin:0 0">Laudo</div>

<div class="btn" style="top:503px;height:28px"></div>
<div class="a" style="left:144px;top:506px;width:1px;height:22px;background:#404040"></div>
<svg class="a" style="left:146px;top:515px" width="9" height="5"><path d="M0 0h9L4.5 5z" fill="#000"/></svg>
<svg class="a" style="left:10px;top:511px" width="14" height="12" viewBox="0 0 14 12"><rect x="4" y="0" width="6" height="4" fill="#404040"/><path d="M1 4h12v6H1z" fill="#5a5a5a"/><rect x="3" y="8" width="8" height="3" fill="#e0e0e0"/></svg>
<div class="bt" style="left:25.0px;top:511.7px;;transform:scaleX(0.960);transform-origin:0 0">Imprimir Lista de Espera</div>

<div class="btn" style="top:533px;height:28px"></div>
<svg class="a" style="left:10px;top:539px" width="15" height="15" viewBox="0 0 15 15"><circle cx="7.5" cy="7.5" r="7" fill="#60b040"/><path d="M7.5 7.5L7.5 0.5A7 7 0 0 1 14 5z" fill="#e05050"/><path d="M7.5 7.5L0.5 7.5A7 7 0 0 1 7.5 0.5z" fill="#f0c030"/><path d="M7.5 7.5L0.5 7.5A7 7 0 0 0 5 14z" fill="#40a0e0"/></svg>
<div class="bt" style="left:44.1px;top:535.7px;;transform:scaleX(0.959);transform-origin:0 0">Minhas Estatísticas</div>
<div class="bt" style="left:64.8px;top:548.7px;;transform:scaleX(0.981);transform-origin:0 0">(Consulta)</div>

<div class="btn" style="top:563px;height:28px"></div>
<div class="a" style="left:144px;top:566px;width:1px;height:22px;background:#404040"></div>
<svg class="a" style="left:146px;top:575px" width="9" height="5"><path d="M0 0h9L4.5 5z" fill="#000"/></svg>
<svg class="a" style="left:9px;top:569px" width="16" height="15" viewBox="0 0 16 15"><circle cx="6" cy="4" r="3.5" fill="#70b050"/><path d="M0 14Q0 8 6 8Q12 8 12 14Z" fill="#70b050"/><circle cx="11" cy="10" r="4" fill="#808080"/><circle cx="11" cy="10" r="1.5" fill="#d0d0d0"/></svg>
<div class="bt" style="left:28.6px;top:572.2px;;transform:scaleX(0.970);transform-origin:0 0">Minhas Configurações</div>

<div class="btn" style="top:593px;height:27px"></div>
<svg class="a" style="left:11px;top:600px" width="12" height="12" viewBox="0 0 12 12"><path d="M1 11L2 8L9 1L11 3L4 10Z" fill="#6a90b0"/></svg>
<div class="bt" style="left:50.4px;top:602.0px;;transform:scaleX(0.993);transform-origin:0 0">Alterar Consulta</div>

<div class="btn" style="top:622px;height:31px"></div>
<svg class="a" style="left:10px;top:629px" width="16" height="16" viewBox="0 0 16 16"><circle cx="6" cy="5" r="3.5" fill="#e8b890"/><path d="M0 15Q0 9 6 9Q12 9 12 15Z" fill="#e0e0e0" stroke="#909090" stroke-width="0.5"/><path d="M10 15L14 5M11 6L14 4L15 8" stroke="#20a020" stroke-width="1.8" fill="none"/></svg>
<div class="bt" style="left:27.9px;top:633.0px;;transform:scaleX(0.968);transform-origin:0 0">Solicitar Entrada Paciente</div>

<div class="btn" style="top:655px;height:30px"></div>
<svg class="a" style="left:10px;top:663px" width="15" height="15" viewBox="0 0 15 15"><circle cx="7" cy="7" r="6" fill="#404848" stroke="#909898" stroke-width="1"/><path d="M4 10L10 4" stroke="#40c040" stroke-width="1.2"/><rect x="8" y="9" width="6" height="5" rx="1" fill="#30b030"/></svg>
<div class="bt" style="left:40.0px;top:659.3px;;transform:scaleX(0.958);transform-origin:0 0">Visualizar Tempos de</div>
<div class="bt" style="left:42.8px;top:672.1px;;transform:scaleX(0.965);transform-origin:0 0">Espera do Paciente</div>

<!-- FILTER PANELS -->
<div class="a" style="left:159px;top:138px;width:1750px;height:64px;background:#f0f0f0"></div>
<div class="a" style="left:159px;top:139px;width:1px;height:63px;background:#808488"></div>
<div class="a" style="left:159px;top:139px;width:695px;height:1px;background:#808488"></div>
<div class="a" style="left:159px;top:201px;width:695px;height:1px;background:#808488"></div>
<div class="a" style="left:159px;top:202px;width:1750px;height:1px;background:#fff"></div>
<div class="a" style="left:1908px;top:138px;width:1px;height:870px;background:#a8acb0"></div>
<!-- status + ordenação panel -->
<div class="hdr" style="left:160px;top:140px;width:360px"></div>
<div class="pbody" style="left:160px;top:159px;width:360px;height:42px"></div>
<div class="a" style="left:520px;top:139px;width:1px;height:63px;background:#9a9ea4"></div>
<div class="t" style="left:263.2px;top:145.3px;font-size:11px;color:#2840a0;transform:scaleX(1.031);transform-origin:0 0">Status:</div>
<div class="rad on" style="left:168px;top:174px"></div>
<div class="t" style="left:184.5px;top:174.9px;font-size:11px;transform:scaleX(1.021);transform-origin:0 0">A Atender</div>
<div class="rad" style="left:246px;top:174px"></div>
<div class="t" style="left:262.5px;top:174.9px;font-size:11px;transform:scaleX(0.985);transform-origin:0 0">Atendidos</div>
<div class="rad" style="left:324px;top:174px"></div>
<div class="t" style="left:340.0px;top:174.9px;font-size:11px;transform:scaleX(0.955);transform-origin:0 0">Ambos</div>
<div class="t" style="left:436.3px;top:144.9px;font-size:11px;color:#2840a0;transform:scaleX(0.985);transform-origin:0 0">Ordenação</div>
<div class="rad on" style="left:416px;top:164px"></div>
<div class="t" style="left:431.8px;top:165.0px;font-size:11px;transform:scaleX(0.974);transform-origin:0 0">Hora Chegada</div>
<div class="rad" style="left:416px;top:183px"></div>
<div class="t" style="left:431.8px;top:184.0px;font-size:11px;transform:scaleX(0.990);transform-origin:0 0">Hora Agendada</div>
<!-- unidades -->
<div class="a" style="left:522px;top:139px;width:1px;height:63px;background:#9a9ea4"></div>
<div class="hdr" style="left:523px;top:140px;width:177px"></div>
<div class="pbody" style="left:523px;top:159px;width:177px;height:42px"></div>
<div class="chk" style="left:534px;top:145px;background:#f4f6f8"></div>
<svg class="a" style="left:536px;top:147px" width="9" height="9"><path d="M1 4L4 7.5L8 1" stroke="#40508a" stroke-width="1.8" fill="none"/></svg>
<div class="t" style="left:549.6px;top:145.5px;font-size:11px;color:#2840a0;transform:scaleX(0.964);transform-origin:0 0">Todas as Unidades</div>
<div class="a" style="left:527px;top:163px;width:171px;height:15px;background:linear-gradient(#e4e6ea,#dcdfe4);border-top:1px solid #c4c8cc"></div>
<svg class="a" style="left:686px;top:170px" width="7" height="4"><path d="M0 0h7L3.5 4z" fill="#a8a8a8"/></svg>
<div class="a" style="left:519px;top:182px;width:181px;height:17px;background:#dfe2e6"></div>
<div class="chk" style="left:523px;top:185px"></div>
<div class="t" style="left:539.5px;top:185.9px;font-size:11px;transform:scaleX(0.968);transform-origin:0 0">Apenas Paciente c/ Pré-Consulta</div>
<!-- tipo -->
<div class="a" style="left:704px;top:139px;width:1px;height:63px;background:#808488"></div>
<div class="a" style="left:854px;top:139px;width:1px;height:63px;background:#808488"></div>
<div class="hdr" style="left:705px;top:140px;width:149px"></div>
<div class="pbody" style="left:705px;top:159px;width:149px;height:42px"></div>
<div class="t" style="left:716.4px;top:146.0px;font-size:11px;color:#2840a0;transform:scaleX(0.952);transform-origin:0 0">Tipo</div>
<div class="rad" style="left:714px;top:164px"></div>
<div class="t" style="left:730.0px;top:165.0px;font-size:11px;transform:scaleX(0.971);transform-origin:0 0">Particular</div>
<div class="rad on" style="left:783px;top:164px"></div>
<div class="t" style="left:798.5px;top:165.0px;font-size:11px;transform:scaleX(1.032);transform-origin:0 0">Todas</div>
<div class="rad" style="left:714px;top:183px"></div>
<div class="t" style="left:730.0px;top:183.4px;font-size:11px;transform:scaleX(0.932);transform-origin:0 0">Guias</div>
<!-- stats -->
<div class="t" style="left:885.2px;top:145.7px;font-size:11.5px;font-weight:bold;color:#101870;transform:scaleX(1.033);transform-origin:0 0">Nr. de Consultas: 3</div>
<div class="t" style="left:860.9px;top:164.1px;font-size:11.5px;font-weight:bold;color:#101870;transform:scaleX(1.010);transform-origin:0 0">Outros Atendimentos: 0</div>
<div class="t" style="left:949.4px;top:182.3px;font-size:11.5px;font-weight:bold;color:#101870;transform:scaleX(1.084);transform-origin:0 0">Total: 3</div>

<!-- GRID -->
<div class="a" style="left:160px;top:203px;width:1748px;height:805px;background:#f0f0f0;border-left:1px solid #6c7078;border-top:1px solid #6c7078;border-right:2px solid #a8acb0"></div>
<div class="gh" style="left:161px;width:50px"></div>
<div class="gh" style="left:211px;width:60px"></div>
<div class="gh" style="left:271px;width:80px"></div>
<div class="gh" style="left:351px;width:300px"></div>
<div class="gh" style="left:651px;width:150px"></div>
<div class="gh" style="left:801px;width:124px"></div>
<div class="gh" style="left:925px;width:84px"></div>
<div class="gh" style="left:1009px;width:200px"></div>
<div class="gh" style="left:1209px;width:64px"></div>
<div class="gh" style="left:1273px;width:64px"></div>
<div class="gh" style="left:1337px;width:131px"></div>
<div class="gh" style="left:1468px;width:124px"></div>
<div class="gh" style="left:1592px;width:250px"></div>
<div class="gh" style="left:1842px;width:64px"></div>
<div class="gt" style="left:164.9px;top:209.3px;;transform:scaleX(1.043);transform-origin:0 0">hr. Cad.</div>
<div class="gt" style="left:213.7px;top:209.3px;;transform:scaleX(1.056);transform-origin:0 0">hr. Agend.</div>
<div class="gt" style="left:274.6px;top:209.3px;;transform:scaleX(0.961);transform-origin:0 0">Tempo Espera</div>
<div class="gt" style="left:353.9px;top:209.3px;;transform:scaleX(0.952);transform-origin:0 0">Nome do Paciente</div>
<div class="gt" style="left:653.6px;top:209.3px;;transform:scaleX(0.991);transform-origin:0 0">Histórico</div>
<div class="gt" style="left:804.2px;top:209.3px;;transform:scaleX(0.979);transform-origin:0 0">Convênio</div>
<div class="gt" style="left:928.1px;top:209.3px;;transform:scaleX(0.985);transform-origin:0 0">Valor</div>
<div class="gt" style="left:1011.8px;top:209.3px;;transform:scaleX(1.039);transform-origin:0 0">Status</div>
<div class="gt" style="left:1211.8px;top:209.3px;">Sexo</div>
<div class="gt" style="left:1275.9px;top:209.3px;;transform:scaleX(1.053);transform-origin:0 0">Idade</div>
<div class="gt" style="left:1340.0px;top:209.3px;">Critério de Atendimento</div>
<div class="gt" style="left:1470.8px;top:209.3px;;transform:scaleX(0.960);transform-origin:0 0">Usuário</div>
<div class="gt" style="left:1594.5px;top:209.3px;;transform:scaleX(0.976);transform-origin:0 0">Usuário Inclusão</div>
<div class="gt" style="left:1845.0px;top:209.3px;width:61px;overflow:hidden">Dt. Nascimento</div>

<!-- rows -->
<div class="row" style="top:224px;background:#3168c4"></div>
<div class="a" style="left:161px;top:224px;width:50px;height:18px;background:#f4f6f6;border:1px dotted #000"></div>
<div class="a" style="left:211px;top:224px;width:1695px;height:1px;background:repeating-linear-gradient(90deg,#e8a040 0 1px,#3a5a90 1px 2px)"></div>
<div class="a" style="left:211px;top:241px;width:1695px;height:1px;background:repeating-linear-gradient(90deg,#e8a040 0 1px,#3a5a90 1px 2px)"></div>
<div class="row" style="top:242px;background:#b9cdea"></div>
<div class="row" style="top:260px;background:#f2f4f4"></div>
<div class="a" style="left:161px;top:278px;width:1745px;height:1px;background:#dcdede"></div>
<div class="a" style="left:210px;top:224px;width:1px;height:18px;background:#5a86d0"></div>
<div class="a" style="left:270px;top:224px;width:1px;height:18px;background:#5a86d0"></div>
<div class="a" style="left:350px;top:224px;width:1px;height:18px;background:#5a86d0"></div>
<div class="a" style="left:650px;top:224px;width:1px;height:18px;background:#5a86d0"></div>
<div class="a" style="left:800px;top:224px;width:1px;height:18px;background:#5a86d0"></div>
<div class="a" style="left:924px;top:224px;width:1px;height:18px;background:#5a86d0"></div>
<div class="a" style="left:1008px;top:224px;width:1px;height:18px;background:#5a86d0"></div>
<div class="a" style="left:1208px;top:224px;width:1px;height:18px;background:#5a86d0"></div>
<div class="a" style="left:1272px;top:224px;width:1px;height:18px;background:#5a86d0"></div>
<div class="a" style="left:1336px;top:224px;width:1px;height:18px;background:#5a86d0"></div>
<div class="a" style="left:1467px;top:224px;width:1px;height:18px;background:#5a86d0"></div>
<div class="a" style="left:1591px;top:224px;width:1px;height:18px;background:#5a86d0"></div>
<div class="a" style="left:1841px;top:224px;width:1px;height:18px;background:#5a86d0"></div>
<div class="a" style="left:210px;top:242px;width:1px;height:18px;background:#d0dcf0"></div>
<div class="a" style="left:270px;top:242px;width:1px;height:18px;background:#d0dcf0"></div>
<div class="a" style="left:350px;top:242px;width:1px;height:18px;background:#d0dcf0"></div>
<div class="a" style="left:650px;top:242px;width:1px;height:18px;background:#d0dcf0"></div>
<div class="a" style="left:800px;top:242px;width:1px;height:18px;background:#d0dcf0"></div>
<div class="a" style="left:924px;top:242px;width:1px;height:18px;background:#d0dcf0"></div>
<div class="a" style="left:1008px;top:242px;width:1px;height:18px;background:#d0dcf0"></div>
<div class="a" style="left:1208px;top:242px;width:1px;height:18px;background:#d0dcf0"></div>
<div class="a" style="left:1272px;top:242px;width:1px;height:18px;background:#d0dcf0"></div>
<div class="a" style="left:1336px;top:242px;width:1px;height:18px;background:#d0dcf0"></div>
<div class="a" style="left:1467px;top:242px;width:1px;height:18px;background:#d0dcf0"></div>
<div class="a" style="left:1591px;top:242px;width:1px;height:18px;background:#d0dcf0"></div>
<div class="a" style="left:1841px;top:242px;width:1px;height:18px;background:#d0dcf0"></div>
<div class="a" style="left:210px;top:260px;width:1px;height:18px;background:#dcdede"></div>
<div class="a" style="left:270px;top:260px;width:1px;height:18px;background:#dcdede"></div>
<div class="a" style="left:350px;top:260px;width:1px;height:18px;background:#dcdede"></div>
<div class="a" style="left:650px;top:260px;width:1px;height:18px;background:#dcdede"></div>
<div class="a" style="left:800px;top:260px;width:1px;height:18px;background:#dcdede"></div>
<div class="a" style="left:924px;top:260px;width:1px;height:18px;background:#dcdede"></div>
<div class="a" style="left:1008px;top:260px;width:1px;height:18px;background:#dcdede"></div>
<div class="a" style="left:1208px;top:260px;width:1px;height:18px;background:#dcdede"></div>
<div class="a" style="left:1272px;top:260px;width:1px;height:18px;background:#dcdede"></div>
<div class="a" style="left:1336px;top:260px;width:1px;height:18px;background:#dcdede"></div>
<div class="a" style="left:1467px;top:260px;width:1px;height:18px;background:#dcdede"></div>
<div class="a" style="left:1591px;top:260px;width:1px;height:18px;background:#dcdede"></div>
<div class="a" style="left:1841px;top:260px;width:1px;height:18px;background:#dcdede"></div>
<div class="gt" style="left:163.2px;top:228.6px;color:#000;transform:scaleX(0.992);transform-origin:0 0">12:36</div>
<div class="gt" style="left:213.4px;top:228.6px;color:#fff;transform:scaleX(0.992);transform-origin:0 0">13:00</div>
<div class="gt" style="left:272.5px;top:228.6px;color:#fff;transform:scaleX(0.928);transform-origin:0 0">10min</div>
<div class="gt" style="left:352.5px;top:228.6px;color:#fff;transform:scaleX(0.900);transform-origin:0 0">TESTE 2 DOIS</div>
<div class="gt" style="left:652.7px;top:228.6px;color:#fff;transform:scaleX(0.910);transform-origin:0 0">CONSULTA</div>
<div class="gt" style="left:802.0px;top:228.6px;color:#fff;transform:scaleX(0.942);transform-origin:0 0">UNIMED GOIANIA</div>
<div class="gt" style="left:976.7px;top:228.6px;color:#fff;transform:scaleX(1.061);transform-origin:0 0">95,00</div>
<div class="gt" style="left:1010.5px;top:228.6px;color:#fff;transform:scaleX(1.023);transform-origin:0 0">A Atender</div>
<div class="gt" style="left:1209.9px;top:228.6px;color:#fff;transform:scaleX(0.948);transform-origin:0 0">FEMININO</div>
<div class="gt" style="left:1274.8px;top:228.6px;color:#fff;transform:scaleX(0.940);transform-origin:0 0">20 ANOS</div>
<div class="gt" style="left:1468.6px;top:228.6px;color:#fff;transform:scaleX(0.883);transform-origin:0 0">CHARLLES</div>
<div class="gt" style="left:1593.5px;top:228.6px;color:#fff;transform:scaleX(0.870);transform-origin:0 0">CHARLLES</div>
<div class="gt" style="left:1843.5px;top:228.6px;color:#fff;transform:scaleX(1.028);transform-origin:0 0">20/05/2000</div>
<div class="gt" style="left:163.2px;top:246.7px;color:#000;transform:scaleX(0.992);transform-origin:0 0">12:37</div>
<div class="gt" style="left:213.4px;top:246.7px;color:#000;transform:scaleX(0.992);transform-origin:0 0">14:00</div>
<div class="gt" style="left:272.5px;top:246.7px;color:#000;transform:scaleX(0.928);transform-origin:0 0">10min</div>
<div class="gt" style="left:352.5px;top:246.7px;color:#000;transform:scaleX(0.885);transform-origin:0 0">TESTE 3</div>
<div class="gt" style="left:652.7px;top:246.7px;color:#000;transform:scaleX(0.914);transform-origin:0 0">CONSULTA INTERNO</div>
<div class="gt" style="left:802.0px;top:246.7px;color:#000;transform:scaleX(0.902);transform-origin:0 0">AFFEGO</div>
<div class="gt" style="left:972.0px;top:246.7px;color:#000;transform:scaleX(1.007);transform-origin:0 0">100,00</div>
<div class="gt" style="left:1010.5px;top:246.7px;color:#000;transform:scaleX(1.023);transform-origin:0 0">A Atender</div>
<div class="gt" style="left:1209.9px;top:246.7px;color:#000;transform:scaleX(0.911);transform-origin:0 0">MASCULINO</div>
<div class="gt" style="left:1274.0px;top:246.7px;color:#000;transform:scaleX(0.943);transform-origin:0 0">4 ANOS</div>
<div class="gt" style="left:1468.6px;top:246.7px;color:#000;transform:scaleX(0.883);transform-origin:0 0">CHARLLES</div>
<div class="gt" style="left:1593.5px;top:246.7px;color:#000;transform:scaleX(0.870);transform-origin:0 0">CHARLLES</div>
<div class="gt" style="left:1843.5px;top:246.7px;color:#000;transform:scaleX(1.028);transform-origin:0 0">10/10/2015</div>
<div class="gt" style="left:163.2px;top:264.7px;color:#000;transform:scaleX(0.992);transform-origin:0 0">12:38</div>
<div class="gt" style="left:213.4px;top:264.7px;color:#000;transform:scaleX(0.992);transform-origin:0 0">15:00</div>
<div class="gt" style="left:272.2px;top:264.7px;color:#000;transform:scaleX(0.935);transform-origin:0 0">8min</div>
<div class="gt" style="left:352.5px;top:264.7px;color:#000;transform:scaleX(0.888);transform-origin:0 0">TESTE ASDADF</div>
<div class="gt" style="left:652.7px;top:264.7px;color:#000;transform:scaleX(0.914);transform-origin:0 0">CONSULTA INTERNO</div>
<div class="gt" style="left:802.0px;top:264.7px;color:#000;transform:scaleX(0.923);transform-origin:0 0">PARTICULAR</div>
<div class="gt" style="left:971.4px;top:264.7px;color:#000;transform:scaleX(1.025);transform-origin:0 0">200,00</div>
<div class="gt" style="left:1010.5px;top:264.7px;color:#000;transform:scaleX(1.023);transform-origin:0 0">A Atender</div>
<div class="gt" style="left:1209.9px;top:264.7px;color:#000;transform:scaleX(0.911);transform-origin:0 0">MASCULINO</div>
<div class="gt" style="left:1274.0px;top:264.7px;color:#000;transform:scaleX(0.952);transform-origin:0 0">120 ANOS</div>
<div class="gt" style="left:1468.6px;top:264.7px;color:#000;transform:scaleX(0.883);transform-origin:0 0">CHARLLES</div>
<div class="gt" style="left:1593.5px;top:264.7px;color:#000;transform:scaleX(0.870);transform-origin:0 0">CHARLLES</div>

<!-- summary bar -->
<div class="a" style="left:161px;top:958px;width:1745px;height:31px;background:linear-gradient(#ffffff,#f2f3f4 30%,#e6e7ea 60%,#d6d9de);border-top:1px solid #6c7078;border-bottom:1px solid #6c7078"></div>
<div class="a" style="left:927px;top:961px;width:80px;height:25px;background:linear-gradient(#fbfbfb,#ededed);border:1px solid #a8acb0"></div>
<div class="t" style="left:950.8px;top:968.9px;font-size:11px;color:#000">R$ 395,00</div>
<!-- scrollbar -->
<div class="a" style="left:161px;top:989px;width:1745px;height:18px;background:linear-gradient(#fafafa,#ececec)"></div>
<svg class="a" style="left:165px;top:992px" width="6" height="11"><path d="M6 0v11L0 5.5z" fill="#3c4c74"/></svg>
<svg class="a" style="left:1895px;top:992px" width="6" height="11"><path d="M0 0v11L6 5.5z" fill="#3c4c74"/></svg>
<div class="a" style="left:178px;top:990px;width:1426px;height:15px;border:1px solid #8c8c8c;border-radius:2px;background:linear-gradient(#f4f4f4,#e6e6e6 45%,#cccccc 50%,#d4d4d4)"></div>
<div class="a" style="left:887px;top:993px;width:8px;height:8px;background:repeating-linear-gradient(90deg,#808080 0 1px,transparent 1px 2px)"></div>
<div class="a" style="left:0;top:1007px;width:1913px;height:1px;background:#9a9ea4"></div>
<div class="a" style="left:0;top:1008px;width:1913px;height:12px;background:linear-gradient(#f8f8f8,#dcdcdc 50%,#f4f4f4 55%,#d8d8d8 80%,#f0f0f0)"></div>


<!-- ANNOTATIONS -->
<style>.ob{position:absolute;border:3px solid #f6a90b;box-shadow:1px 3px 5px rgba(0,0,0,0.45)}.oc{position:absolute;border-radius:50%;background:#f6ab0b;box-shadow:1px 3px 6px rgba(0,0,0,0.4);color:#fff;font-size:29px;line-height:40px;text-align:center}</style>
<div class="a" style="left:4px;top:108px;width:97px;height:30px;border:5px solid #fd4444;box-shadow:1px 3px 5px rgba(0,0,0,0.35)"></div>
<div class="ob" style="left:4px;top:138px;width:153px;height:44px"></div>
<div class="ob" style="left:4px;top:184px;width:153px;height:17px"></div>
<div class="ob" style="left:165px;top:141px;width:219px;height:50px"></div>
<div class="ob" style="left:405px;top:136px;width:111px;height:65px"></div>
<div class="ob" style="left:525px;top:140px;width:176px;height:41px"></div>
<div class="ob" style="left:516px;top:181px;width:184px;height:19px"></div>
<div class="ob" style="left:701px;top:140px;width:149px;height:56px"></div>
<div class="ob" style="left:6px;top:322px;width:159px;height:367px"></div>
<div class="oc" style="left:107.6px;top:104.0px;width:40px;height:40px">A</div>
<div class="oc" style="left:35.6px;top:197.0px;width:40px;height:40px">B</div>
<div class="oc" style="left:255.5px;top:99.5px;width:40px;height:40px">C</div>
<div class="oc" style="left:427.8px;top:97.5px;width:40px;height:40px">D</div>
<div class="oc" style="left:579.8px;top:98.0px;width:40px;height:40px">E</div>
<div class="oc" style="left:560.0px;top:198.0px;width:40px;height:40px">F</div>
<div class="oc" style="left:752.0px;top:96.8px;width:40px;height:40px">G</div>
<div class="oc" style="left:33px;top:67px;width:40px;height:40px;background:#fd4545">2</div>
<svg class="a" style="left:0;top:0" width="260" height="700" viewBox="0 0 260 700"><defs><filter id="msh" x="-30%" y="-30%" width="160%" height="170%"><feDropShadow dx="1" dy="3" stdDeviation="2.5" flood-color="#000" flood-opacity="0.4"/></filter></defs><path d="M172.7 333.4 L198.26 321.83 A12.7 12.7 0 1 1 198.26 344.97 Z" fill="#f6ab0b" filter="url(#msh)"/><text x="199.1" y="338.2" font-family="Liberation Sans" font-size="13" fill="#fff" text-anchor="middle">H</text><path d="M169.5 361.8 L195.06 350.23 A12.7 12.7 0 1 1 195.06 373.37 Z" fill="#f6ab0b" filter="url(#msh)"/><text x="195.9" y="366.6" font-family="Liberation Sans" font-size="13" fill="#fff" text-anchor="middle">I</text><path d="M158.1 393.3 L183.66 381.73 A12.7 12.7 0 1 1 183.66 404.87 Z" fill="#f6ab0b" filter="url(#msh)"/><text x="184.5" y="398.1" font-family="Liberation Sans" font-size="13" fill="#fff" text-anchor="middle">J</text><path d="M161.2 422.8 L186.76 411.23 A12.7 12.7 0 1 1 186.76 434.37 Z" fill="#f6ab0b" filter="url(#msh)"/><text x="187.6" y="427.6" font-family="Liberation Sans" font-size="13" fill="#fff" text-anchor="middle">K</text><path d="M154.9 452.6 L180.46 441.03 A12.7 12.7 0 1 1 180.46 464.17 Z" fill="#f6ab0b" filter="url(#msh)"/><text x="181.3" y="457.4" font-family="Liberation Sans" font-size="13" fill="#fff" text-anchor="middle">L</text><path d="M163.2 485.8 L188.76 474.23 A12.7 12.7 0 1 1 188.76 497.37 Z" fill="#f6ab0b" filter="url(#msh)"/><text x="189.6" y="490.6" font-family="Liberation Sans" font-size="13" fill="#fff" text-anchor="middle">M</text><path d="M155.5 514.7 L181.06 503.13 A12.7 12.7 0 1 1 181.06 526.27 Z" fill="#f6ab0b" filter="url(#msh)"/><text x="181.9" y="519.5" font-family="Liberation Sans" font-size="13" fill="#fff" text-anchor="middle">N</text><path d="M149.8 548.5 L175.36 536.93 A12.7 12.7 0 1 1 175.36 560.07 Z" fill="#f6ab0b" filter="url(#msh)"/><text x="176.2" y="553.3" font-family="Liberation Sans" font-size="13" fill="#fff" text-anchor="middle">O</text><path d="M155.7 576.5 L181.26 564.93 A12.7 12.7 0 1 1 181.26 588.07 Z" fill="#f6ab0b" filter="url(#msh)"/><text x="182.1" y="581.3" font-family="Liberation Sans" font-size="13" fill="#fff" text-anchor="middle">P</text><path d="M153.5 606.9 L179.06 595.33 A12.7 12.7 0 1 1 179.06 618.47 Z" fill="#f6ab0b" filter="url(#msh)"/><text x="179.9" y="611.7" font-family="Liberation Sans" font-size="13" fill="#fff" text-anchor="middle">Q</text><path d="M159.9 634.6 L185.46 623.03 A12.7 12.7 0 1 1 185.46 646.17 Z" fill="#f6ab0b" filter="url(#msh)"/><text x="186.3" y="639.4" font-family="Liberation Sans" font-size="13" fill="#fff" text-anchor="middle">R</text><path d="M151.4 670.8 L176.96 659.23 A12.7 12.7 0 1 1 176.96 682.37 Z" fill="#f6ab0b" filter="url(#msh)"/><text x="177.8" y="675.6" font-family="Liberation Sans" font-size="13" fill="#fff" text-anchor="middle">S</text></svg>
</body></html>
